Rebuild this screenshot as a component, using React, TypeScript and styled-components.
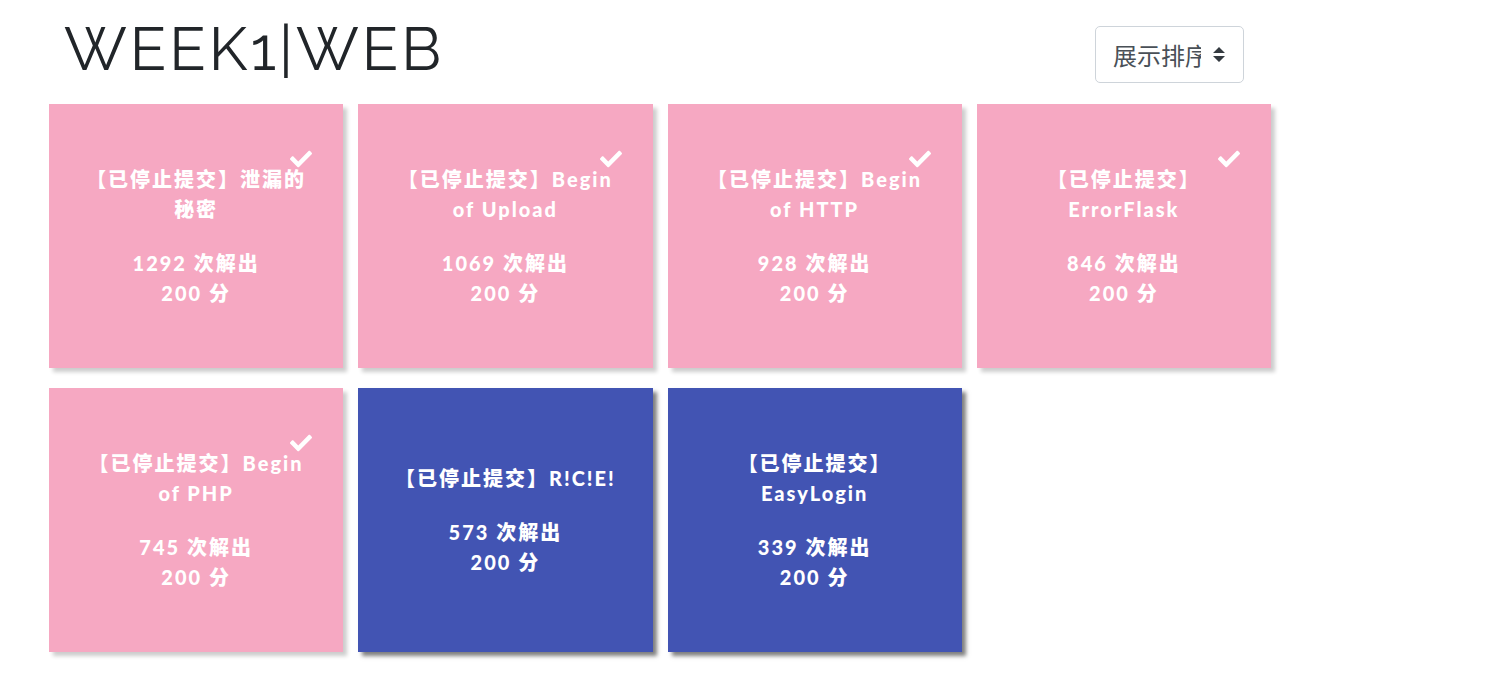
import React from "react";
import styled, { createGlobalStyle } from "styled-components";
import { FaCheck } from "react-icons/fa";

const GlobalStyle = createGlobalStyle`
  *, *::before, *::after { box-sizing: border-box; }
  body {
    margin: 0;
    background: #fff;
    color: #212529;
    font-family: Lato, "Noto Sans CJK SC", sans-serif;
  }
`;

const Page = styled.main`
  padding: 13px 235px 32px 49px;
`;

const Header = styled.header`
  display: flex;
  align-items: flex-start;
  justify-content: space-between;
  margin-bottom: 19px;
  padding: 0 27px 0 15px;
`;

const Title = styled.h1`
  margin: 0;
  font-family: Raleway, Lato, sans-serif;
  font-size: 60px;
  font-weight: 400;
  line-height: 72px;
  letter-spacing: 3px;
  white-space: nowrap;
`;

const SelectWrap = styled.div`
  position: relative;
  flex: none;
  margin-top: 13px;
`;

const Select = styled.select`
  display: block;
  width: 149px;
  height: 57px;
  padding: 0 42px 0 17px;
  appearance: none;
  border: 1px solid #ced4da;
  border-radius: 5px;
  background: #fff;
  color: #495057;
  font-family: "Noto Sans CJK SC", sans-serif;
  font-size: 24px;
  font-weight: 400;
  text-overflow: clip;
`;

const SelectArrows = styled.svg`
  position: absolute;
  top: 21px;
  right: 19px;
  width: 12px;
  height: 15px;
  fill: #343a40;
  pointer-events: none;
`;

const Grid = styled.section`
  display: grid;
  grid-template-columns: repeat(4, minmax(0, 1fr));
  gap: 20px 15px;
`;

const Card = styled.button<{ $solved: boolean }>`
  position: relative;
  display: flex;
  flex-direction: column;
  align-items: center;
  justify-content: center;
  gap: 24px;
  min-height: 264px;
  padding: 30px;
  border: 0;
  background: ${(p) => (p.$solved ? "#f6a8c2" : "#4254b3")};
  box-shadow: 4px 4px 4px ${(p) => (p.$solved ? "rgba(0, 0, 0, 0.2)" : "rgba(0, 0, 0, 0.5)")};
  color: #fff;
  font-family: inherit;
  font-size: 20px;
  font-weight: 900;
  line-height: 30px;
  letter-spacing: 2px;
  text-align: center;
  cursor: pointer;
`;

const Check = styled(FaCheck)`
  position: absolute;
  top: 44px;
  right: 31px;
  width: 22px;
  height: 22px;
`;

const Name = styled.span`
  display: block;
`;

const Stat = styled.span`
  display: block;
`;

interface Challenge {
  name: string;
  solves: number;
  points: number;
  solved: boolean;
}

const challenges: Challenge[] = [
  { name: "【已停止提交】泄漏的秘密", solves: 1292, points: 200, solved: true },
  { name: "【已停止提交】Begin of Upload", solves: 1069, points: 200, solved: true },
  { name: "【已停止提交】Begin of HTTP", solves: 928, points: 200, solved: true },
  { name: "【已停止提交】ErrorFlask", solves: 846, points: 200, solved: true },
  { name: "【已停止提交】Begin of PHP", solves: 745, points: 200, solved: true },
  { name: "【已停止提交】R!C!E!", solves: 573, points: 200, solved: false },
  { name: "【已停止提交】EasyLogin", solves: 339, points: 200, solved: false },
];

export default function App() {
  return (
    <>
      <GlobalStyle />
      <Page lang="zh-CN">
        <Header>
          <Title>WEEK1|WEB</Title>
          <SelectWrap>
            <Select aria-label="展示排序" defaultValue="default">
              <option value="default">展示排序</option>
            </Select>
            <SelectArrows viewBox="0 0 4 5" preserveAspectRatio="none" aria-hidden="true">
              <path d="M2 0L0 2h4zm0 5L0 3h4z" />
            </SelectArrows>
          </SelectWrap>
        </Header>
        <Grid>
          {challenges.map((c) => (
            <Card key={c.name} type="button" $solved={c.solved}>
              {c.solved && <Check aria-hidden="true" />}
              <Name>{c.name}</Name>
              <span>
                <Stat>{c.solves} 次解出</Stat>
                <Stat>{c.points} 分</Stat>
              </span>
            </Card>
          ))}
        </Grid>
      </Page>
    </>
  );
}
